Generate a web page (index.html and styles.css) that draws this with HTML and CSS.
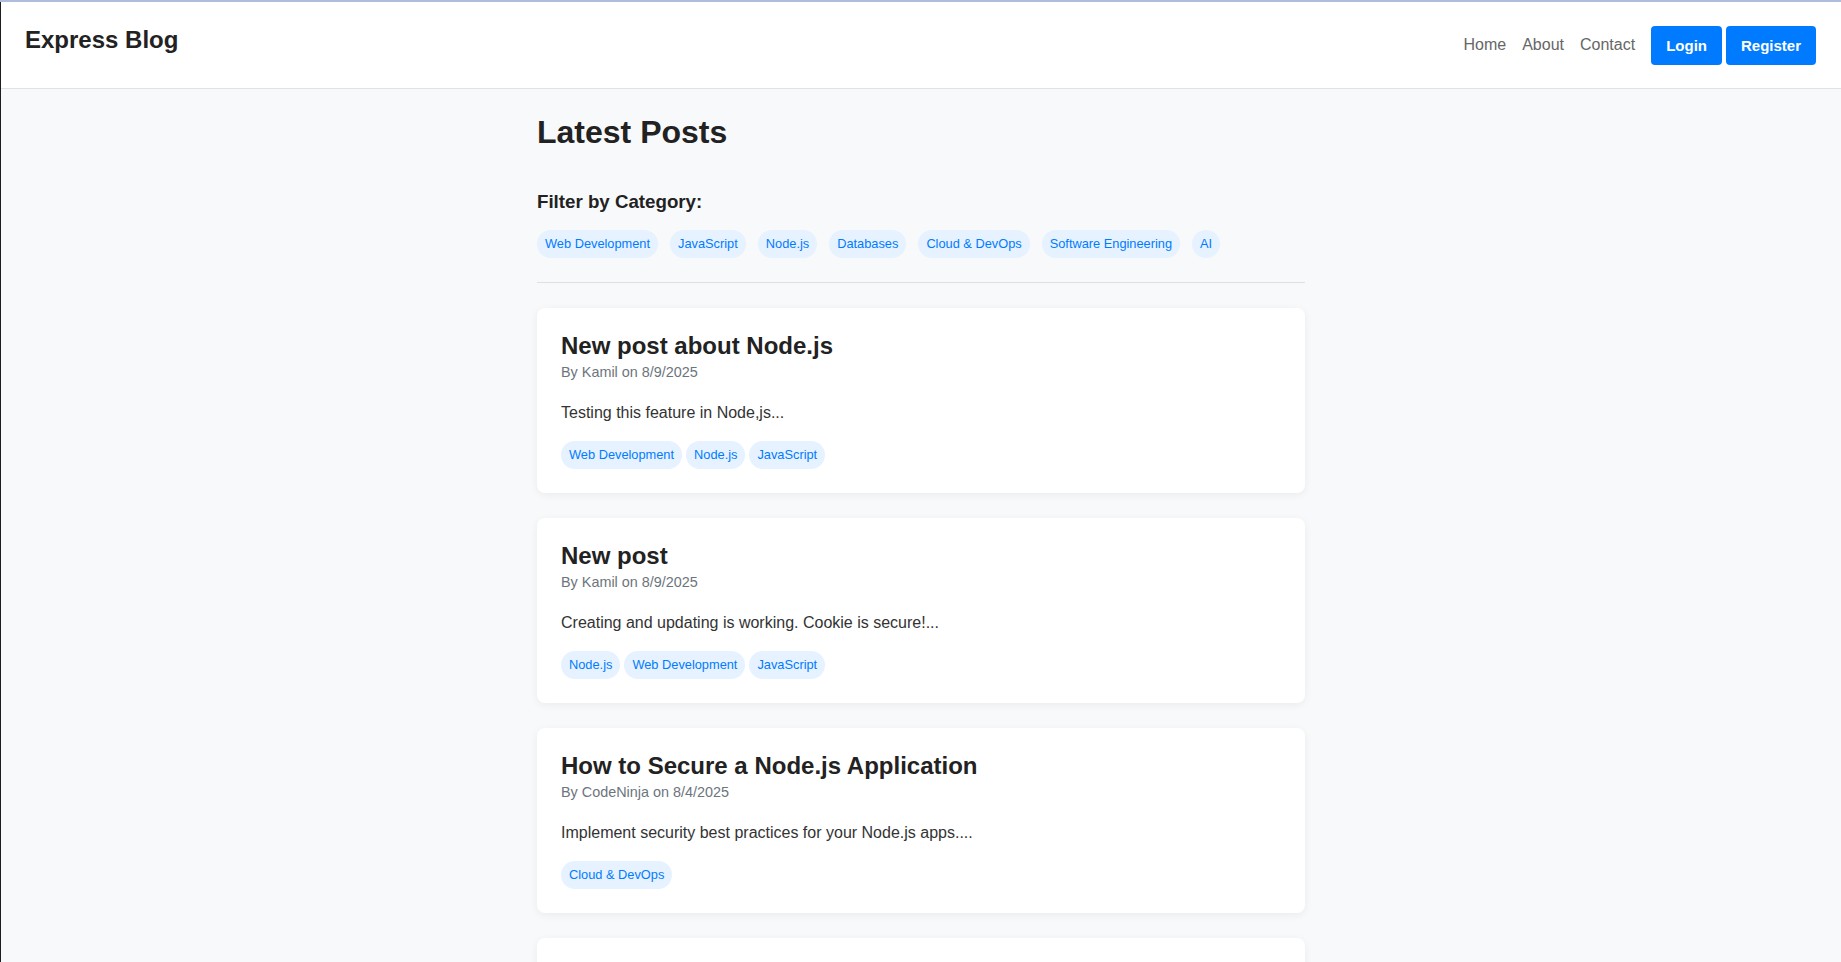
FILE: index.html
```html
<!DOCTYPE html>
<html lang="en">
<head>
<meta charset="utf-8">
<title>Express Blog</title>
<link rel="stylesheet" href="styles.css">
</head>
<body>
<header class="site-header">
  <a class="logo" href="#">Express Blog</a>
  <nav class="nav">
    <a class="nav-link" href="#">Home</a>
    <a class="nav-link" href="#">About</a>
    <a class="nav-link" href="#">Contact</a>
    <div class="auth">
      <a class="btn" href="#">Login</a>
      <a class="btn" href="#">Register</a>
    </div>
  </nav>
</header>

<main class="container">
  <h1 class="page-title">Latest Posts</h1>

  <section class="filter">
    <h3 class="filter-title">Filter by Category:</h3>
    <div class="filter-tags">
      <a class="tag" href="#">Web Development</a>
      <a class="tag" href="#">JavaScript</a>
      <a class="tag" href="#">Node.js</a>
      <a class="tag" href="#">Databases</a>
      <a class="tag" href="#">Cloud &amp; DevOps</a>
      <a class="tag" href="#">Software Engineering</a>
      <a class="tag" href="#">AI</a>
    </div>
  </section>

  <article class="post-card">
    <h2 class="post-title">New post about Node.js</h2>
    <p class="post-meta">By Kamil on 8/9/2025</p>
    <p class="post-excerpt">Testing this feature in Node,js...</p>
    <div class="post-tags">
      <a class="tag" href="#">Web Development</a>
      <a class="tag" href="#">Node.js</a>
      <a class="tag" href="#">JavaScript</a>
    </div>
  </article>

  <article class="post-card">
    <h2 class="post-title">New post</h2>
    <p class="post-meta">By Kamil on 8/9/2025</p>
    <p class="post-excerpt">Creating and updating is working. Cookie is secure!...</p>
    <div class="post-tags">
      <a class="tag" href="#">Node.js</a>
      <a class="tag" href="#">Web Development</a>
      <a class="tag" href="#">JavaScript</a>
    </div>
  </article>

  <article class="post-card">
    <h2 class="post-title">How to Secure a Node.js Application</h2>
    <p class="post-meta">By CodeNinja on 8/4/2025</p>
    <p class="post-excerpt">Implement security best practices for your Node.js apps....</p>
    <div class="post-tags">
      <a class="tag" href="#">Cloud &amp; DevOps</a>
    </div>
  </article>

  <article class="post-card">
    <h2 class="post-title">Getting Started with Express</h2>
    <p class="post-meta">By CodeNinja on 8/3/2025</p>
    <p class="post-excerpt">A quick introduction to building web servers with Express....</p>
    <div class="post-tags">
      <a class="tag" href="#">Web Development</a>
    </div>
  </article>
</main>
</body>
</html>
```

FILE: styles.css
```css
html {
  border-top: 2px solid #aebddb;
}

body {
  margin: 0;
  font-family: "Liberation Sans", Arial, sans-serif;
  font-size: 16px;
  line-height: 1.6;
  color: #333;
  background: #f8f9fa;
  border-left: 1px solid #1c1f1c;
  min-height: 100vh;
}

a {
  text-decoration: none;
}

.site-header {
  display: flex;
  align-items: center;
  justify-content: space-between;
  padding: 24px 25px 23px 24px;
  background: #fff;
  border-bottom: 1px solid #dee2e6;
}

.logo {
  font-size: 24px;
  font-weight: 700;
  line-height: 24px;
  color: #222;
  margin-bottom: 12px;
}

.nav {
  display: flex;
  align-items: center;
  gap: 16px;
}

.nav-link {
  font-size: 16px;
  line-height: 1.15;
  color: #666;
}

.auth {
  display: flex;
  gap: 4px;
}

.btn {
  display: block;
  background: #007bff;
  color: #fff;
  font-size: 15px;
  font-weight: 700;
  line-height: 17px;
  padding: 11px 15px;
  border-radius: 4px;
}

.container {
  max-width: 768px;
  margin: 0 auto;
  padding-top: 24px;
}

.page-title {
  font-size: 32px;
  line-height: 1.2;
  color: #222;
  margin: 0 0 40px;
}

.filter {
  padding-bottom: 24px;
  border-bottom: 1px solid #e0e0e0;
  margin-bottom: 25px;
}

.filter-title {
  font-size: 18.72px;
  line-height: 1.2;
  color: #222;
  margin: 0 0 16px;
}

.filter-tags {
  display: flex;
  flex-wrap: wrap;
  gap: 12px;
}

.tag {
  display: inline-block;
  font-size: 12.8px;
  line-height: 1.6;
  padding: 4px 8px;
  border-radius: 15px;
  background: #e6f2ff;
  color: #007bff;
}

.post-card {
  background: #fff;
  border-radius: 8px;
  padding: 24px;
  margin-bottom: 25px;
  box-shadow: 0 2px 8px rgba(0, 0, 0, 0.06);
}

.post-title {
  font-size: 24px;
  line-height: 1.2;
  color: #222;
  margin: 0;
}

.post-meta {
  font-size: 14.4px;
  color: #6c757d;
  margin: 0;
}

.post-excerpt {
  margin: 16px 0 15px;
  color: #333;
}

.post-tags {
  display: flex;
  flex-wrap: wrap;
  gap: 4px;
}
```
